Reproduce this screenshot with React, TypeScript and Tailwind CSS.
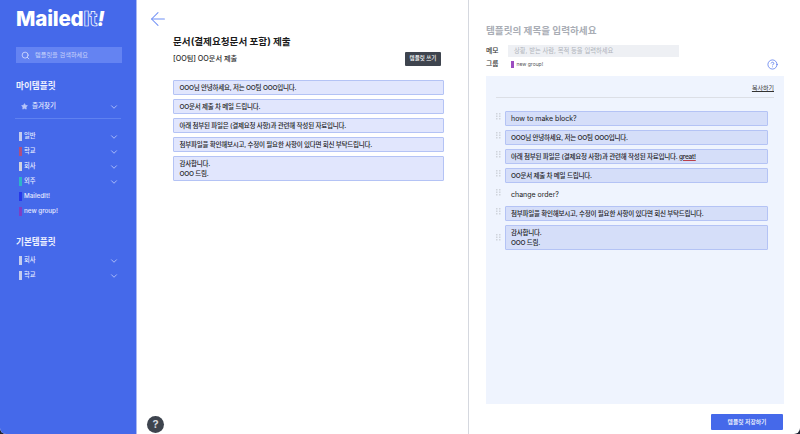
import { ChevronDown, Search, Star, ArrowLeft, CircleHelp } from "lucide-react";

const font = "font-['Inter','Noto_Sans_CJK_KR',sans-serif]";

function Row({ color, label, chevron = true }: { color: string; label: string; chevron?: boolean }) {
  return (
    <div className="flex h-[15px] items-center pl-[19px] pr-[17px]">
      <span className="h-[9px] w-[3px] shrink-0" style={{ background: color }} />
      <span className="ml-[2px] text-[6.3px] font-medium leading-none text-[#e6eaff]">{label}</span>
      {chevron && <ChevronDown className="ml-auto text-[#e6eaff]" size={10} strokeWidth={1.5} />}
    </div>
  );
}

function Drag({ tall }: { tall?: boolean }) {
  return (
    <svg width="5" height="7" viewBox="0 0 5 7" className={`shrink-0 fill-[#d0d4dc] ${tall ? "" : "-translate-y-[2px]"}`}>
      {[0, 2.5, 5].map((y) => (
        <g key={y}>
          <rect x="0" y={y} width="1.5" height="1.5" />
          <rect x="3" y={y} width="1.5" height="1.5" />
        </g>
      ))}
    </svg>
  );
}

function LeftBlock({ children, tall }: { children: React.ReactNode; tall?: boolean }) {
  return (
    <div className={`flex w-[271px] items-center rounded-[1px] border border-[#b4c3f5] bg-[#e1e6fd] pl-[5.5px] pr-[5px] text-[6.5px] font-medium leading-[10px] tracking-[-0.22px] text-[#1c1c1c] ${tall ? "h-[25px]" : "h-[15px]"}`}>
      <div>{children}</div>
    </div>
  );
}

function RightBlock({ children, tall, plain, latin }: { children: React.ReactNode; tall?: boolean; plain?: boolean; latin?: boolean }) {
  return (
    <div className="flex items-center">
      <Drag tall={tall} />
      <div className={`ml-[4px] flex w-[263px] items-center rounded-[1px] border px-[5px] leading-[10px] text-[#1c1c1c] ${latin ? "text-[7px] font-normal" : "text-[6.5px] font-medium tracking-[-0.22px]"} ${plain ? "border-transparent" : "border-[#b4c3f5] bg-[#d5def9]"} ${tall ? "h-[25px]" : "h-[15px]"}`}>
        <div>{children}</div>
      </div>
    </div>
  );
}

export default function App() {
  return (
    <div className={`${font} h-[434px] w-[800px] overflow-hidden bg-[#1e2433]`}>
      <div className="flex h-full overflow-hidden rounded-b-[6px] bg-white">
        <aside className="flex w-[137px] shrink-0 flex-col border-r border-[#a9b8f2] bg-[#4569ea] text-white">
          <div className="pl-[16px] pt-[8px] text-[20.6px] font-extrabold leading-[22px] tracking-[-0.2px]">
            Mailed<span className="text-transparent [-webkit-text-stroke:0.7px_white]">It</span><span className="italic">!</span>
          </div>
          <div className="mx-[16px] mt-[17px] flex h-[16px] w-[106px] items-center bg-[#6483f2] pl-[5px]">
            <Search size={9} className="text-[#dfe5ff]" />
            <span className="ml-[5px] text-[6.2px] leading-none text-[#c8d3fb]">템플릿을 검색하세요</span>
          </div>
          <div className="ml-[16px] mt-[16px] text-[8.6px] font-bold leading-[14px] text-[#eef1ff]">마이템플릿</div>
          <div className="mt-[6px] flex h-[15px] items-center pl-[21px] pr-[17px]">
            <Star size={7} className="fill-[#b9c6f8] text-[#b9c6f8]" />
            <span className="ml-[4px] text-[6.5px] font-medium leading-none text-[#e6eaff]">즐겨찾기</span>
            <ChevronDown className="ml-auto text-[#e6eaff]" size={10} strokeWidth={1.5} />
          </div>
          <div className="mx-[15px] mt-[4px] h-px bg-[#5f81f0]" />
          <div className="mt-[10px] flex flex-col">
            <Row color="#c5cdee" label="일반" />
            <Row color="#b0507f" label="학교" />
            <Row color="#d3d3de" label="회사" />
            <Row color="#2fb4c8" label="외주" />
            <Row color="#2638ea" label="MailedIt!" chevron={false} />
            <Row color="#7d3fc4" label="new group!" chevron={false} />
          </div>
          <div className="ml-[16px] mt-[16px] text-[8.6px] font-bold leading-[14px] text-[#eef1ff]">기본템플릿</div>
          <div className="mt-[4px] flex flex-col">
            <Row color="#c5cdee" label="회사" />
            <Row color="#c5cdee" label="학교" />
          </div>
        </aside>

        <main className="relative flex w-[332px] shrink-0 flex-col border-r border-[#d5d8df] pl-[36px]">
          <ArrowLeft size={22} strokeWidth={1.1} className="-ml-[26px] mt-[8px] text-[#6f8ff5]" />
          <h1 className="mt-[5px] text-[9.6px] font-bold leading-[14px] text-[#1b1b1b]">문서(결제요청문서 포함) 제출</h1>
          <div className="mt-[3px] flex w-[268px] items-center justify-between">
            <span className="text-[7.2px] font-medium leading-[12px] text-[#2a2a2a]">[OO팀] OO문서 제출</span>
            <button className="h-[14px] w-[36px] rounded-[1px] bg-[#3e444e] text-[5.5px] font-medium leading-none text-white">템플릿 쓰기</button>
          </div>
          <div className="mt-[14px] flex flex-col gap-[4px]">
            <LeftBlock>OOO님 안녕하세요, 저는 OO팀 OOO입니다.</LeftBlock>
            <LeftBlock>OO문서 제출 차 메일 드립니다.</LeftBlock>
            <LeftBlock>아래 첨부된 파일은 (결제요청 사항)과 관련해 작성된 자료입니다.</LeftBlock>
            <LeftBlock>첨부파일을 확인해보시고, 수정이 필요한 사항이 있다면 회신 부탁드립니다.</LeftBlock>
            <LeftBlock tall>감사합니다.<br />OOO 드림.</LeftBlock>
          </div>
          <div className="absolute bottom-[1px] left-[10px] flex h-[17px] w-[17px] items-center justify-center rounded-full bg-[#3e444e] text-[11px] font-bold text-[#d5d8df]">?</div>
        </main>

        <section className="flex min-w-0 flex-1 flex-col pl-[17px] pr-[17px]">
          <div className="mt-[24px] text-[9.6px] font-bold leading-[14px] text-[#a9adb5]">템플릿의 제목을 입력하세요</div>
          <div className="mt-[7px] flex items-center">
            <span className="w-[22px] text-[6.8px] font-medium leading-none text-[#333]">메모</span>
            <div className="flex h-[12px] w-[171px] items-center bg-[#eef0f4] pl-[6px] text-[6.3px] leading-none text-[#b0b4bb]">상황, 받는 사람, 목적 등을 입력하세요</div>
          </div>
          <div className="mt-[1px] flex h-[12px] items-center">
            <span className="w-[25px] text-[6.8px] font-medium leading-none text-[#333]">그룹</span>
            <span className="h-[7px] w-[2.5px] bg-[#9b4dc0]" />
            <span className="ml-[3px] text-[5px] leading-none text-[#555]">new group!</span>
            <CircleHelp size={11} strokeWidth={1.5} className="ml-auto mr-[5px] text-[#4569ea]" />
          </div>
          <div className="mt-[6px] flex h-[328px] w-[298px] flex-col bg-[#eff4fe]">
            <div className="mx-[10px] flex h-[22px] shrink-0 items-center justify-end border-b border-[#dcdfe6] pt-[2px] text-[6px] leading-none text-[#333]">
              <span className="underline">복사하기</span>
            </div>
            <div className="mt-[13px] flex flex-col gap-[4px] pl-[10px]">
              <RightBlock latin>how to make block?</RightBlock>
              <RightBlock>OOO님 안녕하세요, 저는 OO팀 OOO입니다.</RightBlock>
              <RightBlock>아래 첨부된 파일은 (결제요청 사항)과 관련해 작성된 자료입니다. <span className="underline decoration-[#b8404c] decoration-[0.5px] underline-offset-[1px]">great!</span></RightBlock>
              <RightBlock>OO문서 제출 차 메일 드립니다.</RightBlock>
              <RightBlock plain latin>change order?</RightBlock>
              <RightBlock>첨부파일을 확인해보시고, 수정이 필요한 사항이 있다면 회신 부탁드립니다.</RightBlock>
              <RightBlock tall>감사합니다.<br />OOO 드림.</RightBlock>
            </div>
          </div>
          <button className="ml-auto mt-[10px] h-[16px] w-[72px] rounded-[1px] bg-[#4569ea] text-[5.8px] font-medium leading-none text-white">템플릿 저장하기</button>
        </section>
      </div>
    </div>
  );
}
